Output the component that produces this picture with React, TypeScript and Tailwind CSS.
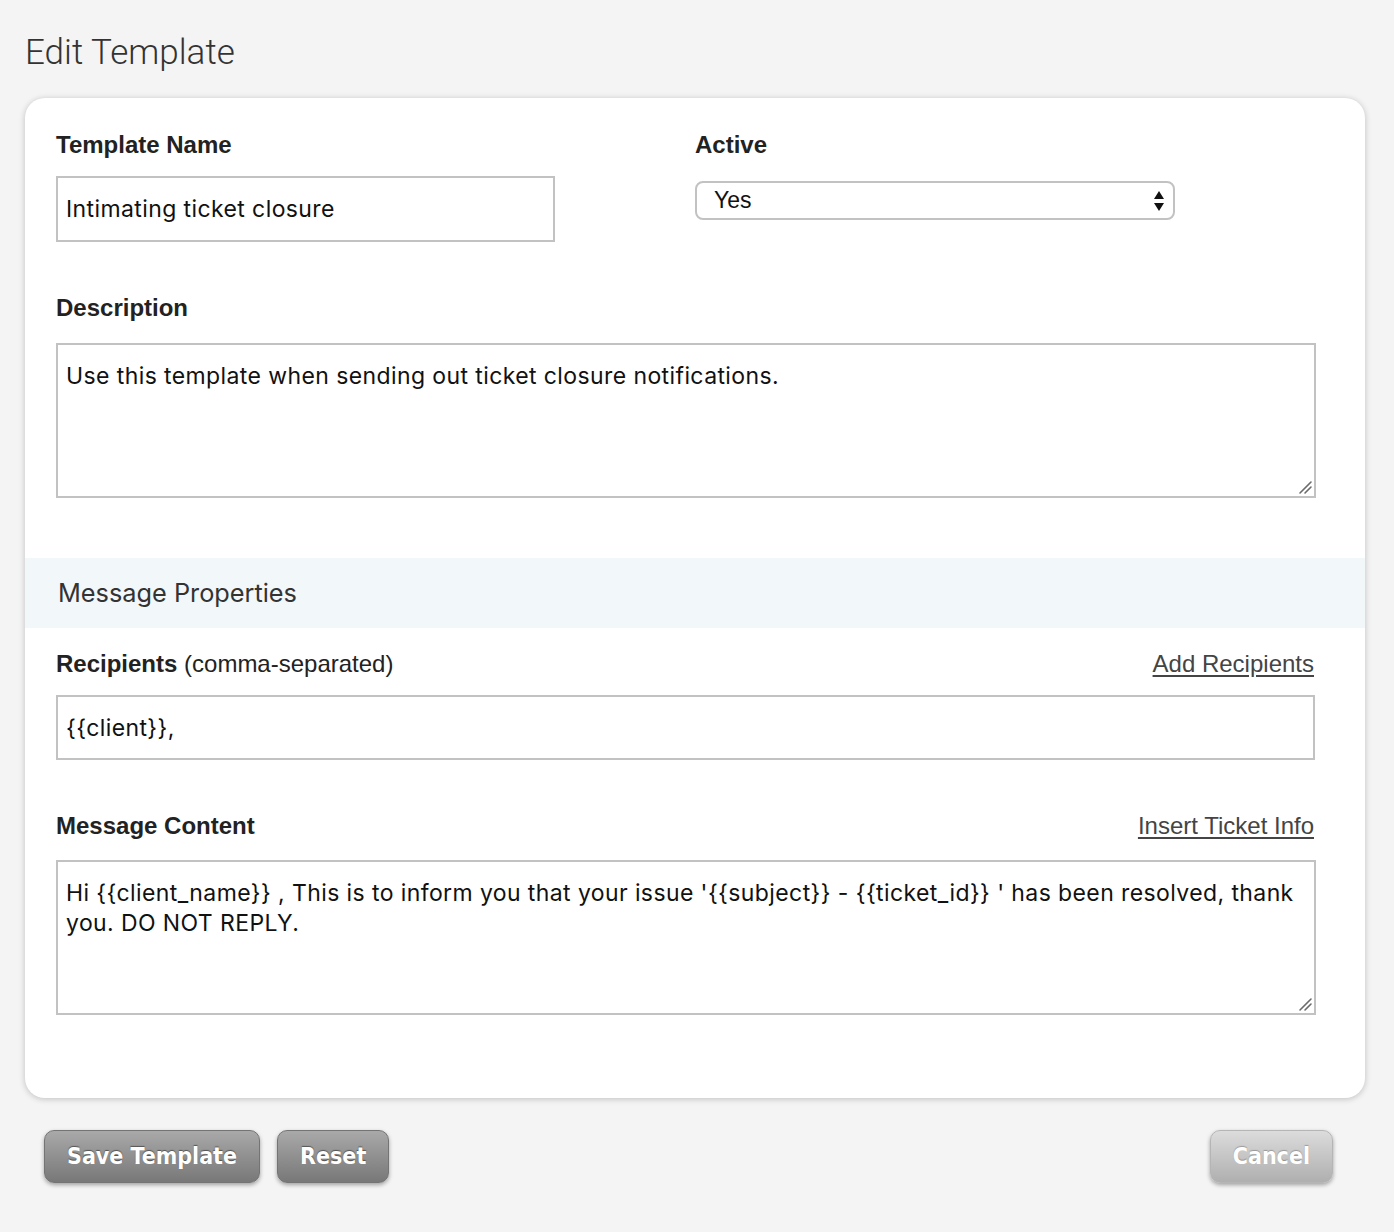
import React, { useState } from "react";

const labelCls = "block text-[24px] leading-[28px] font-bold text-[#222] font-['Liberation_Sans',Arial,sans-serif]";
const fieldCls =
  "w-full border-2 border-[#c2c2c2] bg-white text-[23px] tracking-[0.4px] text-[#111] font-['Inter',sans-serif] outline-none";
const linkCls =
  "text-[24px] leading-[28px] text-[#444] underline underline-offset-[3px] font-['Liberation_Sans',Arial,sans-serif]";

const SelectArrows = () => (
  <svg width="12" height="24" viewBox="0 0 12 24" className="absolute right-[10px] top-1/2 -translate-y-1/2 pointer-events-none">
    <path d="M6 2 L11 10 L1 10 Z" fill="#111" />
    <path d="M6 22 L11 14 L1 14 Z" fill="#111" />
  </svg>
);

const Grip = () => (
  <svg width="16" height="16" viewBox="0 0 16 16" className="absolute right-[3px] bottom-[3px] pointer-events-none">
    <path d="M3 14 L14 3" stroke="#6b6b6b" strokeWidth="1.6" strokeLinecap="round" />
    <path d="M8 14 L14 8" stroke="#6b6b6b" strokeWidth="1.6" strokeLinecap="round" />
  </svg>
);

const Button = ({ children, light }: { children: React.ReactNode; light?: boolean }) => (
  <button
    className={`h-[53px] rounded-[10px] px-[22px] text-[23px] font-bold text-white font-['DejaVu_Sans_Condensed','DejaVu_Sans',sans-serif] shadow-[0_2px_4px_rgba(0,0,0,0.35)] ${
      light
        ? "bg-gradient-to-b from-[#dcdcdc] to-[#afafaf] border border-[#b5b5b5] [text-shadow:0_-1px_1px_rgba(0,0,0,0.25)]"
        : "bg-gradient-to-b from-[#a9a9a9] to-[#787878] border border-[#747474] [text-shadow:0_-1px_1px_rgba(0,0,0,0.45)]"
    }`}
  >
    {children}
  </button>
);

export default function App() {
  const [name, setName] = useState("Intimating ticket closure");
  const [active, setActive] = useState("Yes");
  const [description, setDescription] = useState("Use this template when sending out ticket closure notifications.");
  const [recipients, setRecipients] = useState("{{client}},");
  const [content, setContent] = useState(
    "Hi {{client_name}} , This is to inform you that your issue '{{subject}} - {{ticket_id}} ' has been resolved, thank you. DO NOT REPLY."
  );

  return (
    <div className="min-h-[1232px] bg-[#f4f4f4] px-[25px] pt-[30px] pr-[29px]">
      <h1 className="text-[35px] leading-[46px] font-light text-[#333] font-['Roboto',sans-serif]">
        Edit Template
      </h1>

      <div className="mt-[22px] bg-white rounded-[20px] shadow-[0_1px_6px_rgba(0,0,0,0.22)] pt-[33px] pb-[83px]">
        <div className="pl-[31px] pr-[49px]">
          <div className="grid grid-cols-[639px_1fr]">
            <div>
              <label className={labelCls}>Template Name</label>
              <input
                value={name}
                onChange={(e) => setName(e.target.value)}
                className={`${fieldCls} mt-[17px] !w-[499px] h-[66px] px-[8px]`}
              />
            </div>
            <div>
              <label className={labelCls}>Active</label>
              <div className="relative mt-[22px] w-[480px]">
                <select
                  value={active}
                  onChange={(e) => setActive(e.target.value)}
                  className="appearance-none w-full h-[39px] rounded-[8px] border-2 border-[#c2c2c2] bg-white pl-[17px] text-[23px] text-[#111] font-['Liberation_Sans',Arial,sans-serif] outline-none"
                >
                  <option>Yes</option>
                  <option>No</option>
                </select>
                <SelectArrows />
              </div>
            </div>
          </div>

          <label className={`${labelCls} mt-[52px]`}>Description</label>
          <div className="relative mt-[21px]">
            <textarea
              value={description}
              onChange={(e) => setDescription(e.target.value)}
              className={`${fieldCls} h-[155px] px-[8px] pt-[16px] leading-[30px] resize-none block`}
            />
            <Grip />
          </div>
        </div>

        <div className="mt-[60px] h-[70px] bg-[#f2f7fa] flex items-center pl-[33px]">
          <h2 className="text-[25.3px] text-[#333] font-['Inter',sans-serif]">Message Properties</h2>
        </div>

        <div className="pl-[31px] pr-[49px]">
          <div className="mt-[22px] flex items-center justify-between pr-[2px]">
            <label className={labelCls}>
              Recipients <span className="font-normal">(comma-separated)</span>
            </label>
            <a href="#" className={linkCls}>Add Recipients</a>
          </div>
          <input
            value={recipients}
            onChange={(e) => setRecipients(e.target.value)}
            className={`${fieldCls} mt-[17px] !w-[1259px] h-[65px] px-[8px]`}
          />

          <div className="mt-[52px] flex items-center justify-between pr-[2px]">
            <label className={labelCls}>Message Content</label>
            <a href="#" className={linkCls}>Insert Ticket Info</a>
          </div>
          <div className="relative mt-[20px]">
            <textarea
              value={content}
              onChange={(e) => setContent(e.target.value)}
              className={`${fieldCls} h-[155px] px-[8px] pt-[16px] leading-[30px] resize-none block`}
            />
            <Grip />
          </div>
        </div>
      </div>

      <div className="mt-[32px] flex items-center pl-[19px] pr-[32px]">
        <div className="flex gap-[17px]">
          <Button>Save Template</Button>
          <Button>Reset</Button>
        </div>
        <div className="ml-auto">
          <Button light>Cancel</Button>
        </div>
      </div>
    </div>
  );
}
